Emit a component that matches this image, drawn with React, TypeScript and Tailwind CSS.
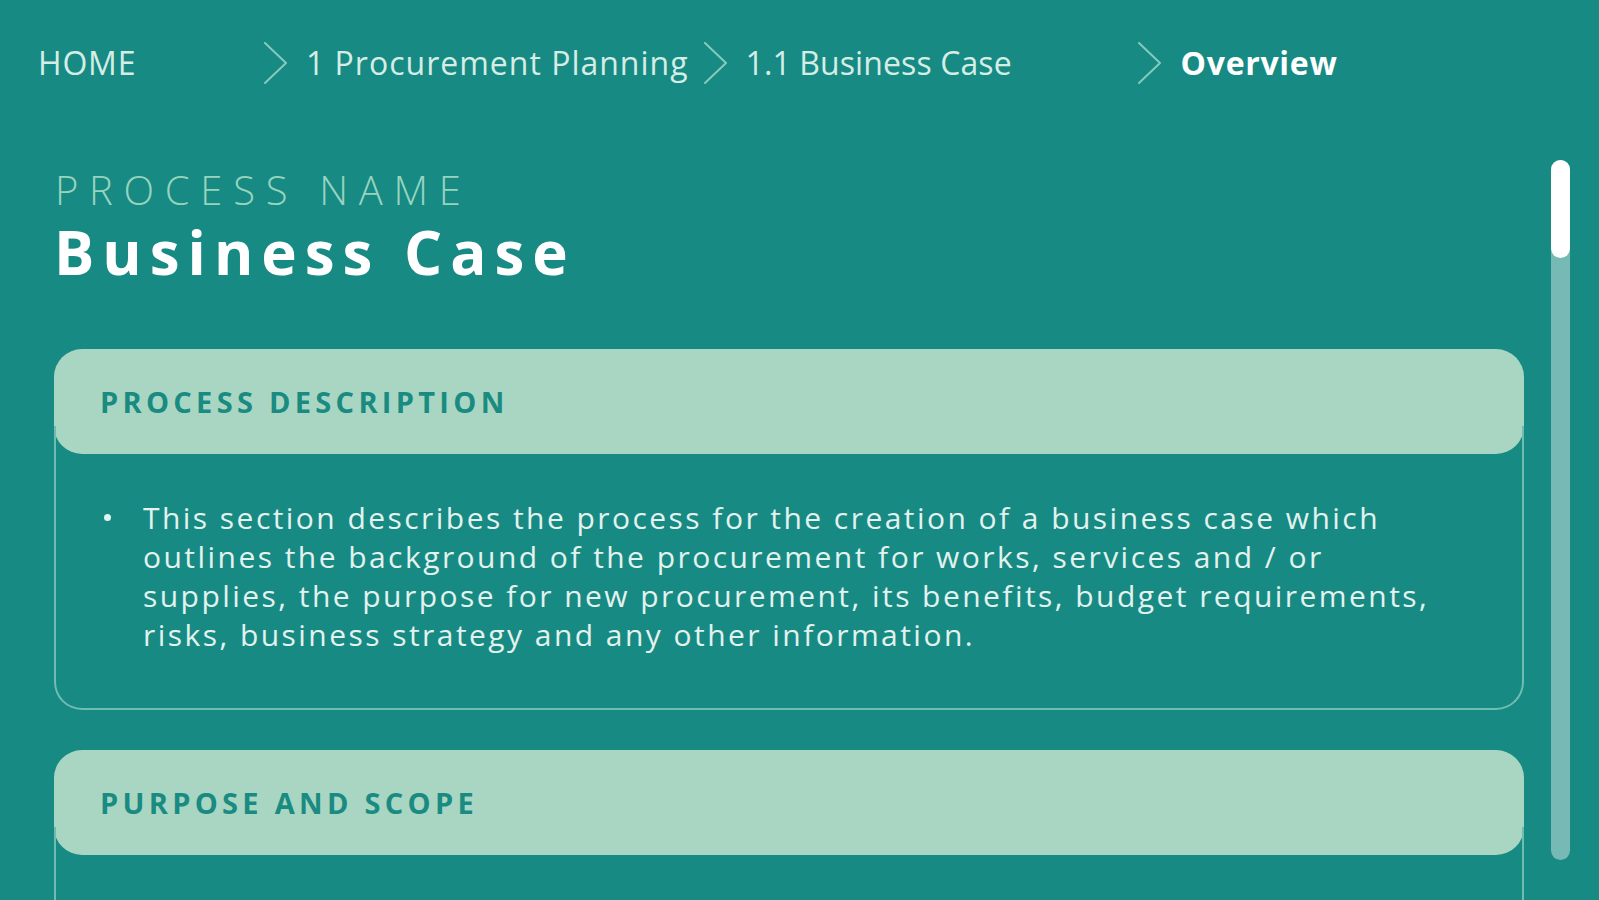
import React from "react";

function Chevron({ className = "" }: { className?: string }) {
  return (
    <svg
      className={className}
      width="25"
      height="42"
      viewBox="0 0 25 42"
      fill="none"
      stroke="#86c9bd"
      strokeWidth="2"
      strokeLinecap="round"
      strokeLinejoin="round"
    >
      <path d="M2 1 L23 21 L2 41" />
    </svg>
  );
}

function Card({
  title,
  children,
  open = true,
}: {
  title: string;
  children?: React.ReactNode;
  open?: boolean;
}) {
  return (
    <section className="w-[1470px]">
      <header className="h-[105px] rounded-[28px] bg-[#a9d6c3] flex items-center pl-[46px]">
        <h2 className="text-[29px] font-bold tracking-[4.3px] text-[#198b81] leading-none">
          {title}
        </h2>
      </header>
      <div
        className={
          open
            ? "-mt-[28px] pt-[28px] border-2 border-t-0 border-[#6fbdb1] rounded-b-[28px]"
            : "-mt-[28px] pt-[28px] border-2 border-t-0 border-b-0 border-[#6fbdb1] h-[200px]"
        }
      >
        {children}
      </div>
    </section>
  );
}

export default function App() {
  return (
    <div className="w-[1599px] h-[900px] overflow-hidden bg-[#178a83] font-['Open_Sans',sans-serif]">
      <nav className="h-[126px] flex items-center pl-[38px] text-[32px] leading-none text-[#d6ede6]">
        <span className="w-[225px] tracking-[0.8px]">HOME</span>
        <Chevron />
        <span className="ml-[18px] tracking-[1px]">1 Procurement Planning</span>
        <Chevron className="ml-[14px]" />
        <span className="ml-[18px] w-[391px] tracking-[0.1px]">1.1 Business Case</span>
        <Chevron />
        <span className="ml-[19px] font-bold text-white tracking-[0.7px]">Overview</span>
      </nav>
      <div className="flex">
        <main className="w-[1524px] pl-[54px] shrink-0">
          <p className="mt-[44px] pl-[1px] text-[40px] leading-[40px] font-light tracking-[10.7px] text-[#97d4bf]">
            PROCESS NAME
          </p>
          <h1 className="mt-[12px] text-[60px] leading-none font-bold tracking-[8px] text-white">
            Business Case
          </h1>
          <div className="mt-[67px] flex flex-col gap-[40px]">
            <Card title="PROCESS DESCRIPTION">
              <div className="pt-[44px] pb-[54px] pl-[48px] flex">
                <div className="w-[39px] shrink-0 pt-[16px]">
                  <div className="w-[7px] h-[7px] rounded-full bg-[#e3f2ee]" />
                </div>
                <p className="text-[30px] leading-[39px] tracking-[2.45px] text-[#e3f2ee] whitespace-nowrap">
                  This section describes the process for the creation of a business case which
                  <br />
                  outlines the background of the procurement for works, services and / or
                  <br />
                  supplies, the purpose for new procurement, its benefits, budget requirements,
                  <br />
                  risks, business strategy and any other information.
                </p>
              </div>
            </Card>
            <Card title="PURPOSE AND SCOPE" open={false} />
          </div>
        </main>
        <div className="ml-[27px] mt-[34px] w-[19px] h-[700px] rounded-full bg-[#77b9b5] shrink-0">
          <div className="h-[98px] rounded-full bg-white" />
        </div>
      </div>
    </div>
  );
}
